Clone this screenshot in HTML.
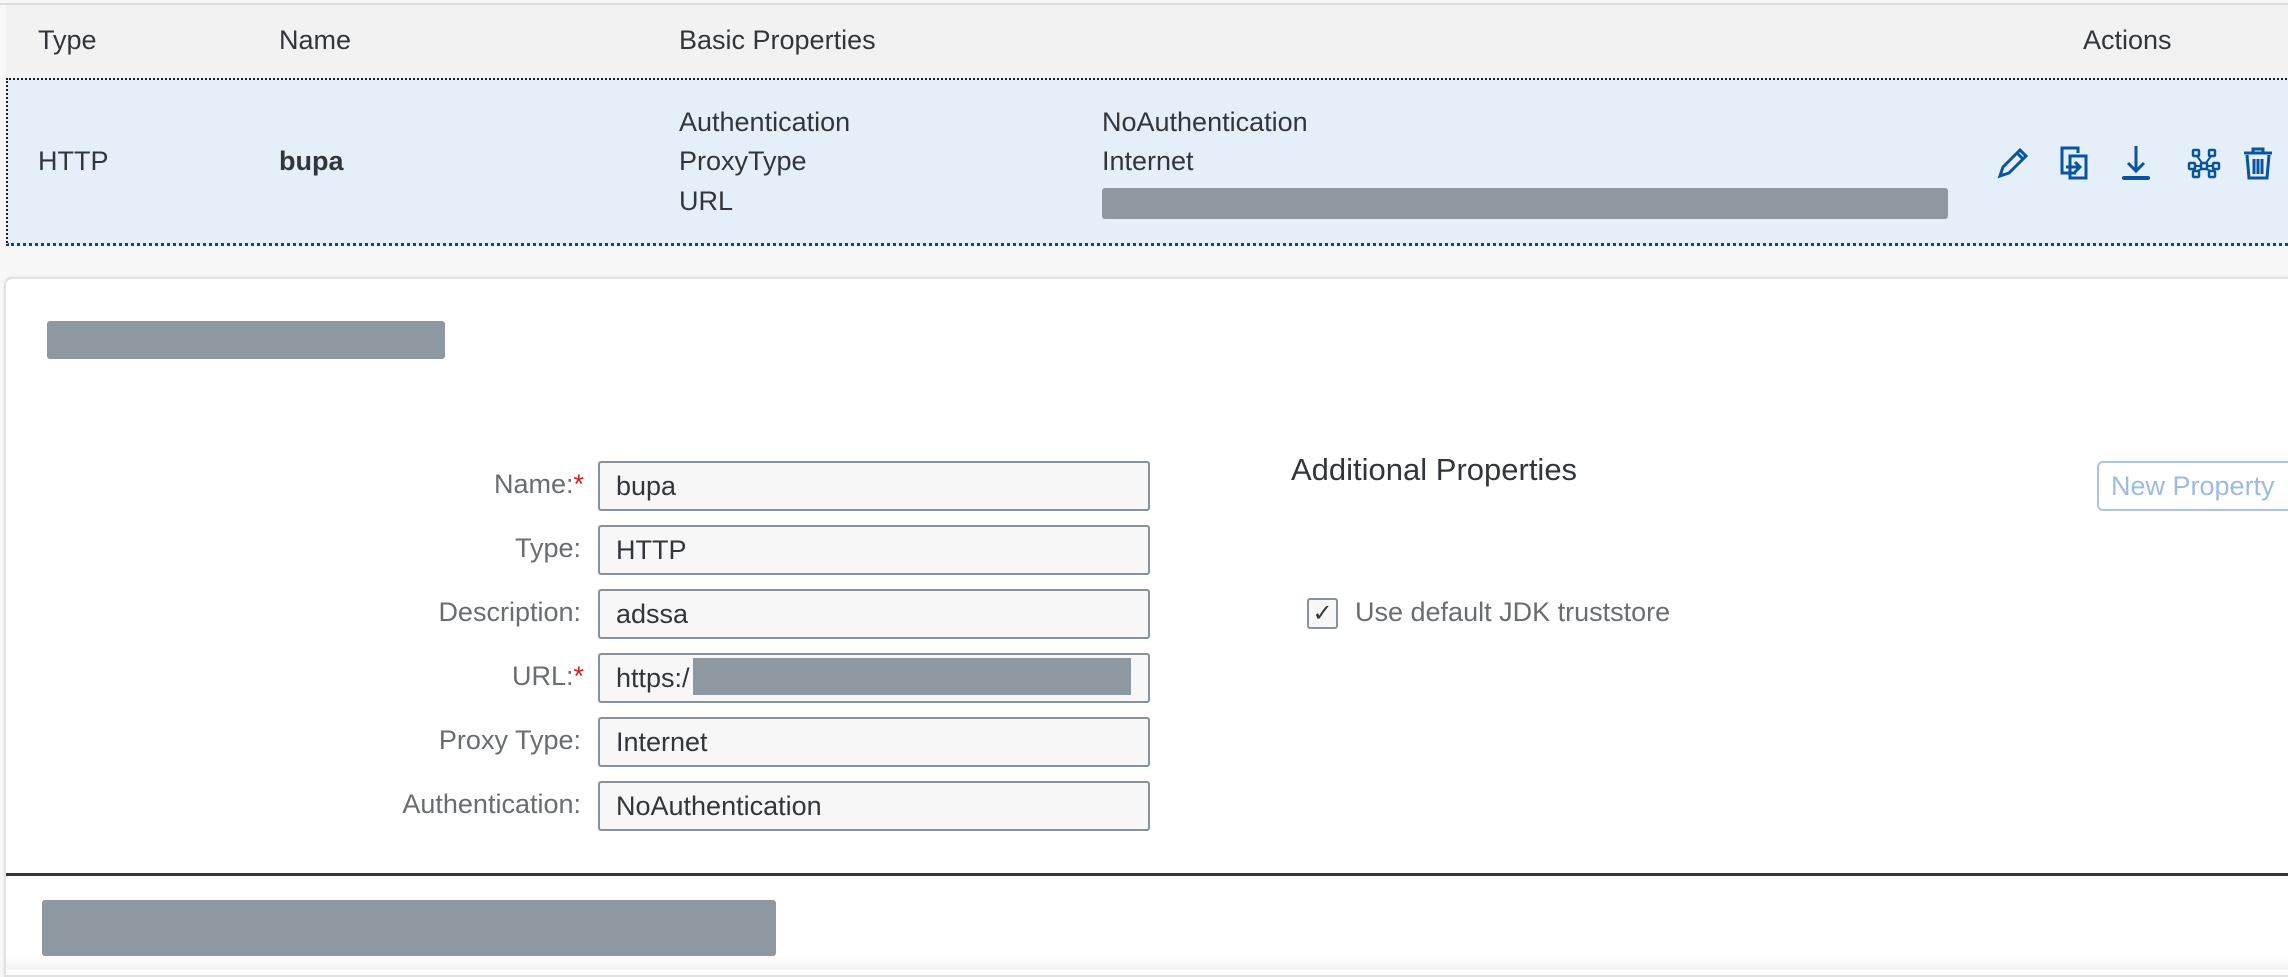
<!DOCTYPE html>
<html><head><meta charset="utf-8"><style>
*{margin:0;padding:0;box-sizing:border-box}
body{width:2288px;height:970px;overflow:hidden;background:#f7f7f7;font-family:"Liberation Sans",sans-serif;color:#32363a;position:relative;font-size:27px}
.a{position:absolute;white-space:nowrap}
.bar{position:absolute;background:#8e98a1;border-radius:3px}
.lbl{position:absolute;right:0;text-align:right;color:#6a6d70;width:400px}
.inp{position:absolute;left:598px;width:552px;height:50px;background:#f7f7f7;border:2px solid #89919a;border-radius:3px;padding-left:16px;line-height:46px;color:#32363a}
.req{color:#d0201e}
</style></head><body>
<div class="a" style="left:0;top:3px;width:2288px;height:2px;background:#dcdcdc"></div>
<div class="a" style="left:6px;top:5px;width:2282px;height:73px;background:#f2f2f2"></div>
<div class="a" style="left:38px;top:25px">Type</div>
<div class="a" style="left:279px;top:25px">Name</div>
<div class="a" style="left:679px;top:25px">Basic Properties</div>
<div class="a" style="left:2083px;top:25px">Actions</div>
<div class="a" style="left:6px;top:78px;width:2300px;height:168px;background:#e5eff9;border:2px dotted #222;border-bottom:3px dotted #0a4a8a"></div>
<div class="a" style="left:38px;top:146px">HTTP</div>
<div class="a" style="left:279px;top:146px;font-weight:bold">bupa</div>
<div class="a" style="left:679px;top:107px">Authentication</div>
<div class="a" style="left:679px;top:146px">ProxyType</div>
<div class="a" style="left:679px;top:186px">URL</div>
<div class="a" style="left:1102px;top:107px">NoAuthentication</div>
<div class="a" style="left:1102px;top:146px">Internet</div>
<div class="bar" style="left:1102px;top:188px;width:846px;height:31px"></div>
<svg class="a" style="left:1990px;top:140px" width="298" height="46" viewBox="0 0 298 46" fill="none" stroke="#0854a0" stroke-width="3">
<path d="M10 36 L13 27 L30 10 L36 16 L19 33 Z M27 13 L33 19"/>
<path d="M86 33 H72 V8 H88 V13 M80 16 H96 V38 H80 Z M76 27 H90 M85 22 L90 27 L85 32"/>
<path d="M146 6 V31 M138 23 L146 31 L154 23"/><path d="M134 38 H158" stroke-width="4" stroke-linecap="round"/>
<g stroke-width="2.5"><rect x="203" y="10" width="6" height="6" rx="1"/><rect x="219" y="10" width="6" height="6" rx="1"/><rect x="199" y="23" width="6" height="6" rx="1"/><rect x="211" y="23" width="6" height="6" rx="1"/><rect x="223" y="23" width="6" height="6" rx="1"/><rect x="203" y="31" width="6" height="6" rx="1"/><rect x="219" y="31" width="6" height="6" rx="1"/>
<path d="M207 16 L212 23 M221 16 L216 23 M205 26 H211 M217 26 H223 M207 31 L212 29 M221 31 L216 29" stroke-width="2"/></g>
<path d="M254 13 H282 M263 12 V9 H273 V12 M257 15 L259 38 H277 L279 15 M264 19 V34 M268 19 V34 M272 19 V34" stroke-width="3"/>
</svg>
<div class="a" style="left:4px;top:277px;width:2290px;height:700px;background:#fff;border:2px solid #e2e2e2;border-radius:8px 0 0 0;box-shadow:0 0 2px rgba(0,0,0,.1)"></div>
<div class="bar" style="left:47px;top:321px;width:398px;height:38px"></div>
<div style="position:absolute;left:0;top:0;width:584px">
<div class="lbl" style="top:469px">Name:<span class="req">*</span></div>
<div class="lbl" style="top:533px;right:3px">Type:</div>
<div class="lbl" style="top:597px;right:3px">Description:</div>
<div class="lbl" style="top:661px">URL:<span class="req">*</span></div>
<div class="lbl" style="top:725px;right:3px">Proxy Type:</div>
<div class="lbl" style="top:789px;right:3px">Authentication:</div>
</div>
<div class="inp" style="top:461px">bupa</div>
<div class="inp" style="top:525px">HTTP</div>
<div class="inp" style="top:589px">adssa</div>
<div class="inp" style="top:653px">https:/</div>
<div class="bar" style="left:693px;top:658px;width:438px;height:37px;border-radius:0"></div>
<div class="inp" style="top:717px">Internet</div>
<div class="inp" style="top:781px">NoAuthentication</div>
<div class="a" style="left:1291px;top:452px;font-size:31px">Additional Properties</div>
<div class="a" style="left:2097px;top:461px;width:200px;height:50px;border:2px solid #a9c4e4;border-radius:6px;color:#9dbbe0;line-height:46px;padding-left:12px">New Property</div>
<div class="a" style="left:1307px;top:598px;width:31px;height:31px;border:2px solid #89919a;border-radius:3px;background:#f7f7f7;text-align:center;line-height:27px;font-size:24px;color:#32363a">✓</div>
<div class="a" style="left:1355px;top:597px;color:#6a6d70">Use default JDK truststore</div>
<div class="a" style="left:6px;top:873px;width:2282px;height:3px;background:#32363a"></div>
<div class="a" style="left:6px;top:955px;width:2288px;height:15px;background:linear-gradient(#fff,#f4f4f4)"></div>
<div class="bar" style="left:42px;top:900px;width:734px;height:56px"></div>
</body></html>
